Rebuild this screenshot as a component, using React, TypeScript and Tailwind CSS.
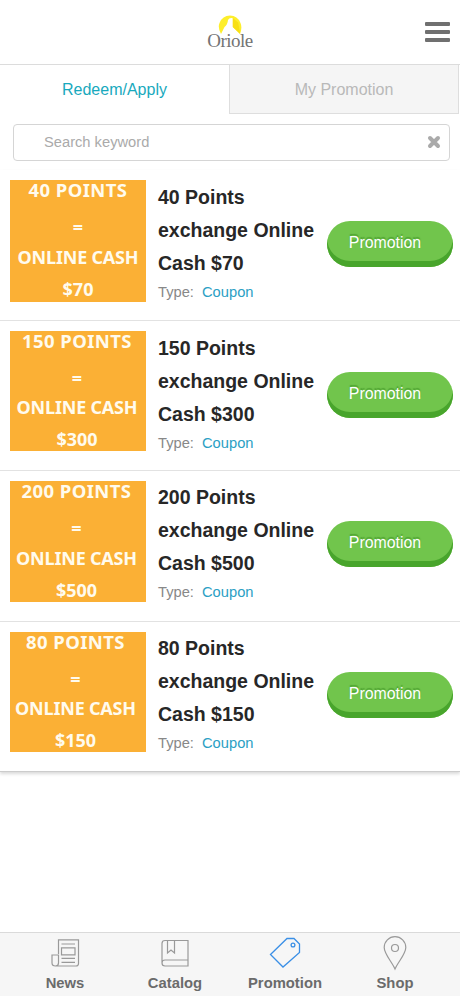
import React from "react";

const promotions = [
  {
    title: "40 Points exchange Online Cash $70",
    banner: ["40 POINTS", "=", "ONLINE CASH", "$70"],
    row: "h-[151px]",
    image: "h-[122px]",
    text: "",
    equals: "h-[33px]",
    details: "pt-[11px]",
    button: "mt-[51px]",
  },
  {
    title: "150 Points exchange Online Cash $300",
    banner: ["150 POINTS", "=", "ONLINE CASH", "$300"],
    row: "h-[150px]",
    image: "h-[120px]",
    text: "pr-0.5",
    equals: "h-8",
    details: "pt-[11px]",
    button: "mt-[51px]",
  },
  {
    title: "200 Points exchange Online Cash $500",
    banner: ["200 POINTS", "=", "ONLINE CASH", "$500"],
    row: "h-[151px]",
    image: "h-[121px]",
    text: "pr-[3px]",
    equals: "h-[33px]",
    details: "pt-[10px]",
    button: "mt-[50px]",
  },
  {
    title: "80 Points exchange Online Cash $150",
    banner: ["80 POINTS", "=", "ONLINE CASH", "$150"],
    row: "h-[149px]",
    image: "h-[120px]",
    text: "pr-[5px]",
    equals: "h-8",
    details: "pt-[10px]",
    button: "mt-[50px]",
  },
];

const NewsIcon = () => (
  <svg width="32" height="32" viewBox="0 0 32 32" fill="none" stroke="#999" strokeWidth="1.2">
    <path d="M9.5 17V2.8h20v23.7q0 2.5-2.5 2.5H6.5q-3.5 0-3.5-3V18h6.5v8q0 3-3 3" />
    <path d="M12.5 7H26M12.5 10.8H26v7H12.5zM12.5 21.3H26M12.5 25.3H26" />
  </svg>
);

const CatalogIcon = () => (
  <svg width="32" height="32" viewBox="0 0 32 32" fill="none" stroke="#999" strokeWidth="1.2">
    <path d="M29 3.5H6q-3 0-3 3V26q0 3 3 3h23zM3 26q0-3 3-3h23" />
    <path d="M8.5 3.5V16l3.5-3 3.5 3V3.5" />
  </svg>
);

const TagIcon = () => (
  <svg width="32" height="32" viewBox="0 0 32 32" fill="none" stroke="#3a8fe6" strokeWidth="1.3">
    <path d="M1.5 17.5 18 1.5h7L30.5 7v8.5L14 30z" />
    <circle cx="24" cy="8" r="1.9" />
  </svg>
);

const PinIcon = () => (
  <svg width="32" height="36" viewBox="0 0 32 36" fill="none" stroke="#999" strokeWidth="1.2">
    <path d="M16 34C13 27 5.2 19 5.2 12.5a10.8 10.8 0 0 1 21.6 0C26.8 19 19 27 16 34z" />
    <circle cx="16" cy="13" r="3.5" />
  </svg>
);

const tabs = [
  { label: "News", icon: <NewsIcon /> },
  { label: "Catalog", icon: <CatalogIcon /> },
  { label: "Promotion", icon: <TagIcon /> },
  { label: "Shop", icon: <PinIcon /> },
];

const Header = () => (
  <header className="grid h-[65px] grid-cols-3 items-center border-b border-[#dcdcdc]">
    <div />
    <div className="flex flex-col items-center pt-px">
      <svg className="h-5 w-6" viewBox="0 0 24 20">
        <path d="M3 19Q-.5 12.500 1.500 8 4.500 .5 12 .5T22.500 8q2 4.500-.5 11L15 12V3.200Q11 2.500 10 5 9.500 10 6.500 12z" fill="#fdee2c" />
        <path d="M14.700 3l5.500 4.500 2 11.500-7.500-7z" fill="#f8df14" />
      </svg>
      <span className="-mt-[4px] font-['Liberation_Serif',serif] text-[19px] leading-5 tracking-[-0.5px] text-[#747474]">
        Oriole
      </span>
    </div>
    <button className="mr-[10px] flex w-[25px] flex-col gap-1 justify-self-end" aria-label="Menu">
      <span className="h-1 w-full rounded-[1px] bg-[#707070]" />
      <span className="h-1 w-full rounded-[1px] bg-[#707070]" />
      <span className="h-1 w-full rounded-[1px] bg-[#707070]" />
    </button>
  </header>
);

const App = () => {
  return (
    <div className="flex h-[996px] w-[460px] flex-col bg-white font-['Liberation_Sans',Arial,sans-serif]">
      <Header />

      <div className="flex h-[49px] text-base">
        <div className="flex w-[229px] items-center justify-center text-[#18a9bd]">Redeem/Apply</div>
        <div className="flex w-[230px] items-center justify-center border-x border-b border-[#dedede] bg-[#f5f5f5] pt-px text-[#b9b9b9]">
          My Promotion
        </div>
      </div>

      <div className="mx-[13px] mt-[10px] flex h-[37px] w-[437px] items-center justify-between rounded border border-[#d5d5d5] pl-[30px] pr-2">
        <span className="text-[14.7px] text-[#aaa]">Search keyword</span>
        <svg className="-mt-0.5" width="14" height="14" viewBox="0 0 14 14" stroke="#aaa" strokeWidth="4" strokeLinecap="round">
          <path d="M3 3l8 8M11 3l-8 8" />
        </svg>
      </div>

      <div className="mt-[9px] border-b border-[#ccc] shadow-[0_2px_3px_rgba(0,0,0,0.15)]">
        {promotions.map((item, index) => (
          <div key={index} className={`flex border-b border-[#e2e2e2] last:border-b-0 ${item.row}`}>
            <div className={`mt-[10px] ml-[10px] w-[136px] shrink-0 bg-[#fbb035] ${item.image}`}>
              <div
                className={`flex flex-col items-center whitespace-nowrap font-['Noto_Sans',sans-serif] text-[18px] font-bold text-[#fffbee] ${item.text}`}
              >
                <span className="h-[34px] text-[18.5px] leading-[20px] tracking-[0.4px]">{item.banner[0]}</span>
                <span className={`leading-[26px] ${item.equals}`}>{item.banner[1]}</span>
                <span className="h-8 leading-[21px] tracking-[-0.2px]">{item.banner[2]}</span>
                <span className="leading-[21px]">{item.banner[3]}</span>
              </div>
            </div>
            <div className={`ml-3 w-[160px] shrink-0 ${item.details}`}>
              <h3 className="text-[19.5px] font-bold leading-[33px] text-[#272727]">{item.title}</h3>
              <p className="text-[14.7px] leading-6 text-[#888]">
                Type: <span className="ml-1 text-[#2ca0c4]">Coupon</span>
              </p>
            </div>
            <button
              className={`ml-[9px] h-[46px] w-[126px] rounded-[23px] bg-[#71c54c] pb-[2px] pr-[10px] text-[15.9px] text-white shadow-[inset_0_-6px_0_#48a52c] [text-shadow:0_-2px_1px_#4fa332] ${item.button}`}
            >
              Promotion
            </button>
          </div>
        ))}
      </div>

      <nav className="mt-auto flex h-16 border-t border-[#dadada] bg-[#f6f6f6]">
        {tabs.map((tab) => (
          <div key={tab.label} className="flex w-[110px] flex-col items-center first:ml-[10px]">
            <div className="flex h-10 items-center">{tab.icon}</div>
            <span className="text-[14.8px] font-bold leading-5 text-[#6b6b6b]">{tab.label}</span>
          </div>
        ))}
      </nav>
    </div>
  );
};

export default App;
